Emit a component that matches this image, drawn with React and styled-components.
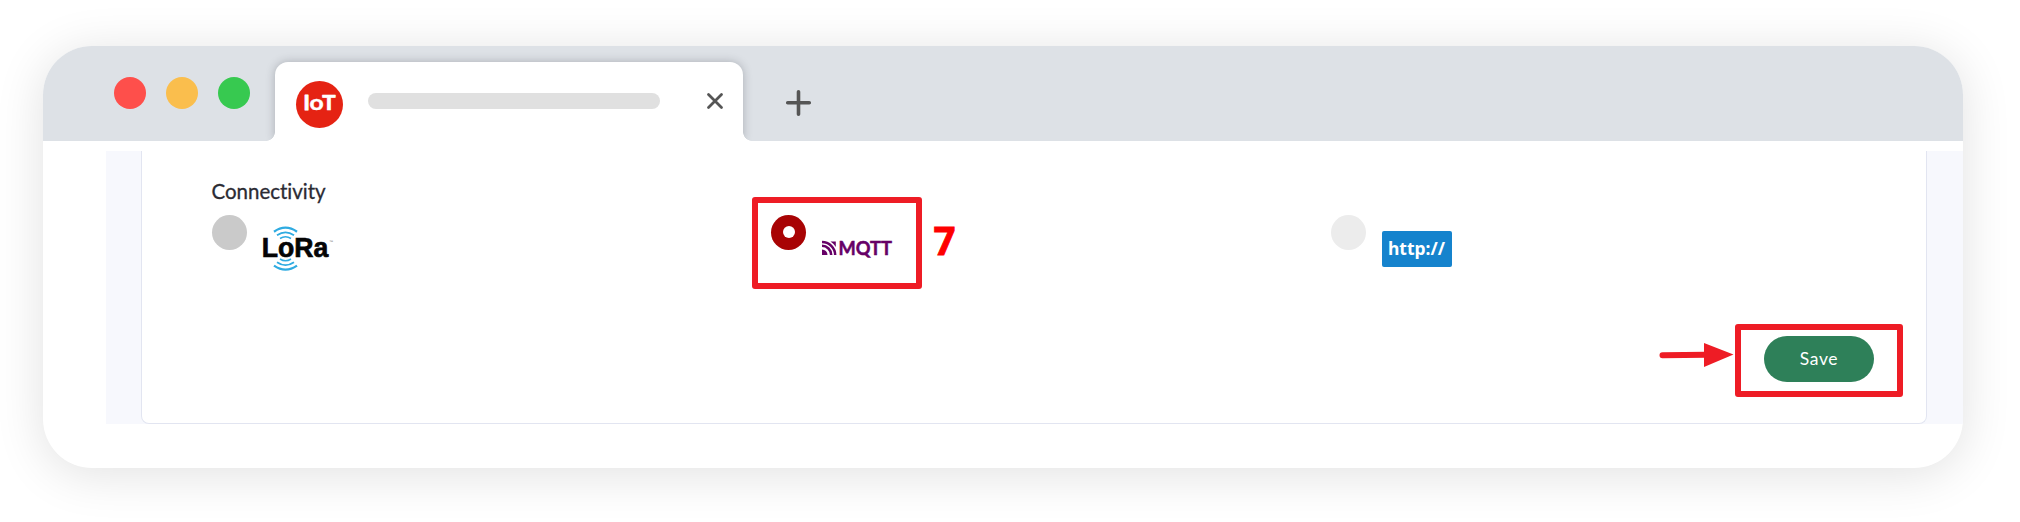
import React from 'react';
import styled, { createGlobalStyle } from 'styled-components';

const GlobalStyle = createGlobalStyle`
  *, *::before, *::after { box-sizing: border-box; }
  body { margin: 0; background: #fff; font-family: Lato, "Liberation Sans", sans-serif; overflow: hidden; }
  svg { display: block; overflow: visible; }
`;

const Stage = styled.div`
  width: 2020px;
  height: 522px;
  padding: 46px 57px 54px 43px;
`;

const BrowserWindow = styled.main`
  height: 422px;
  border-radius: 49px;
  background: #fff;
  overflow: hidden;
  box-shadow: 0 6px 50px rgba(0, 0, 0, 0.12);
`;

const TitleBar = styled.header`
  height: 95px;
  display: flex;
  padding: 16px 0 0 71px;
  background: #dde1e6;
`;

const Lights = styled.div`
  display: flex;
  gap: 20px;
  padding-top: 15px;
  width: 161px;
`;

const Light = styled.span`
  width: 32px;
  height: 32px;
  border-radius: 50%;
  background: ${(p) => p.$color};
`;

const Tab = styled.div`
  position: relative;
  width: 468px;
  height: 79px;
  padding: 19px 20px 0 21px;
  display: flex;
  align-items: flex-start;
  background: #fff;
  border-radius: 13px 13px 0 0;
  box-shadow: 0 0 10px rgba(40, 42, 55, 0.28);
  clip-path: inset(-16px -12px 0 -12px);
  &::before,
  &::after {
    content: '';
    position: absolute;
    bottom: 0;
    width: 9px;
    height: 9px;
  }
  &::before {
    left: -9px;
    background: radial-gradient(circle at 0 0, transparent 8.5px, #fff 9.2px);
  }
  &::after {
    right: -9px;
    background: radial-gradient(circle at 100% 0, transparent 8.5px, #fff 9.2px);
  }
`;

const TitlePlaceholder = styled.div`
  width: 292px;
  height: 16px;
  margin: 12px 47px 0 25px;
  border-radius: 8px;
  background: #e0e0e0;
`;

const CloseIcon = styled.svg`
  margin-top: 12px;
`;

const NewTabIcon = styled.svg`
  margin: 28px 0 0 43px;
`;

const Content = styled.section`
  height: 273px;
  margin: 10px 0 0 63px;
  padding: 0 36px 0 35px;
  background: #f7f8fd;
`;

const Card = styled.div`
  height: 273px;
  padding: 26px 52px 0 69.5px;
  background: #fff;
  border: solid #e2e5f1;
  border-width: 0 1px 1px;
  border-radius: 0 0 8px 8px;
`;

const FieldLabel = styled.h2`
  margin: 0;
  height: 37px;
  line-height: 28px;
  font-size: 20.5px;
  font-weight: 400;
  font-variant-ligatures: none;
  letter-spacing: -0.02px;
  color: #2b2b33;
  -webkit-text-stroke: 0.3px #2b2b33;
`;

const Options = styled.div`
  display: grid;
  grid-template-columns: repeat(3, 559.5px);
  height: 122px;
`;

const Option = styled.label`
  position: relative;
  display: flex;
  gap: 16px;
  width: max-content;
  height: 60px;
`;

const Radio = styled.span`
  width: 35px;
  height: 35px;
  margin-top: 0.5px;
  border-radius: 50%;
  background: ${(p) => p.$color};
  display: grid;
  place-items: center;
  &::after {
    content: '';
    width: 12px;
    height: 12px;
    border-radius: 50%;
    background: ${(p) => (p.$checked ? '#fff' : 'transparent')};
  }
`;

const Highlight = styled.span`
  position: absolute;
  inset: ${(p) => p.$inset};
  border: 6px solid #ee1c25;
  border-radius: 3px;
`;

const StepNumber = styled.span`
  position: absolute;
  left: 162.5px;
  top: 2px;
  font: 700 38.5px/48px "Noto Sans", "Open Sans", sans-serif;
  color: #fe0000;
  -webkit-text-stroke: 0.8px #fe0000;
`;

const HttpBadge = styled.span`
  width: 70px;
  height: 36px;
  margin-top: 17px;
  border-radius: 2px;
  background: #1583cd;
  color: #fff;
  font: 700 17.5px/34px "Noto Sans", "Open Sans", sans-serif;
  text-align: center;
`;

const Actions = styled.footer`
  display: flex;
  justify-content: flex-end;
`;

const SaveWrap = styled.div`
  position: relative;
`;

const SaveButton = styled.button`
  display: block;
  width: 110px;
  height: 46px;
  padding: 0 0 1px;
  border: 0;
  border-radius: 23px;
  background: #2e8059;
  color: #fff;
  font: 400 17.5px Lato, sans-serif;
  letter-spacing: 0.6px;
`;

const Arrow = styled.svg`
  position: absolute;
  left: -106px;
  top: 6px;
`;

function IotLogo() {
  return (
    <svg width="47" height="47" viewBox="0 0 47 47">
      <circle cx="23.5" cy="23.5" r="23.5" fill="#e52313" />
      <g fill="#fff" stroke="#fff" strokeWidth="1" strokeLinejoin="round" fontFamily="Lato, sans-serif" fontWeight="700" fontSize="21">
        <text x="7.6" y="29.3">I</text>
        <text x="13.4" y="29.3" fontSize="20" strokeWidth=".4" textLength="14.2" lengthAdjust="spacingAndGlyphs">o</text>
        <text x="26.2" y="29.3" strokeWidth=".7" textLength="13.4" lengthAdjust="spacingAndGlyphs">T</text>
      </g>
    </svg>
  );
}

function LoraLogo() {
  return (
    <svg width="70" height="60" viewBox="0 0 70 60">
      <g fill="none" stroke="#2fabe1" strokeWidth="2.3">
        <path d="M11 17.7Q22.5 9.7 34 17.7" />
        <path d="M14 21.3Q22.5 15.5 31 21.3" strokeWidth="1.8" />
        <path d="M17 24.5Q22.5 21 28 24.5" strokeWidth="1.5" />
        <path d="M17 45Q22.5 48.5 28 45" strokeWidth="1.5" />
        <path d="M14 48.3Q22.5 54.1 31 48.3" strokeWidth="1.8" />
        <path d="M11 51.6Q22.5 59.6 34 51.6" />
      </g>
      <g fill="#050505" stroke="#050505" strokeWidth=".7" fontFamily="'Liberation Sans', sans-serif" fontWeight="700">
        <text x="-1.2" y="42.5" fontSize="28" textLength="66.5" lengthAdjust="spacingAndGlyphs">LoRa</text>
      </g>
      <text x="66" y="29" fontSize="4" fill="#777" fontFamily="'Liberation Sans', sans-serif">™</text>
    </svg>
  );
}

function MqttLogo() {
  return (
    <svg width="70" height="60" viewBox="0 0 70 60">
      <g fill="none" stroke="#660066" strokeWidth="2.5">
        <path d="M0 35.5A5.5 5.5 0 0 1 5.5 41H0Z" fill="#660066" stroke="none" />
        <path d="M0 31.8A9.2 9.2 0 0 1 9.2 41" />
        <path d="M0 28A13.2 13.2 0 0 1 13.2 41" />
        <path d="M8.5 27.5A17 17 0 0 1 13.8 33V27.5Z" fill="#660066" stroke="none" />
      </g>
      <text x="16.4" y="41" textLength="53.5" lengthAdjust="spacingAndGlyphs" fontFamily="Lato, sans-serif" fontWeight="700" fontSize="19" fill="#660066" stroke="#660066" strokeWidth=".5">
        MQTT
      </text>
    </svg>
  );
}

export default function App() {
  return (
    <>
      <GlobalStyle />
      <Stage>
        <BrowserWindow>
          <TitleBar>
            <Lights>
              <Light $color="#fe4f4b" />
              <Light $color="#fabe4d" />
              <Light $color="#37c950" />
            </Lights>
            <Tab>
              <IotLogo />
              <TitlePlaceholder />
              <CloseIcon width="16" height="16" viewBox="0 0 16 16" stroke="#555" strokeWidth="2.8" strokeLinecap="round">
                <path d="M1.5 1.5l13 13M14.5 1.5l-13 13" />
              </CloseIcon>
            </Tab>
            <NewTabIcon width="25" height="26" viewBox="0 0 25 26" stroke="#555" strokeWidth="3.6" strokeLinecap="round">
              <path d="M12.5 1.7v22.6M1.7 12.8h21.6" />
            </NewTabIcon>
          </TitleBar>
          <Content>
            <Card>
              <FieldLabel>Connectivity</FieldLabel>
              <Options>
                <Option>
                  <Radio $color="#cacaca" />
                  <LoraLogo />
                </Option>
                <Option>
                  <Radio $color="#a80304" $checked />
                  <MqttLogo />
                  <Highlight $inset="-17.5px -30px -14.5px -19px" />
                  <StepNumber>7</StepNumber>
                </Option>
                <Option>
                  <Radio $color="#ececec" />
                  <HttpBadge>http://</HttpBadge>
                </Option>
              </Options>
              <Actions>
                <SaveWrap>
                  <SaveButton>Save</SaveButton>
                  <Highlight $inset="-12px -28.5px -14.5px -29.5px" />
                  <Arrow width="76" height="26" viewBox="0 0 76 26">
                    <path d="M4.5 13.2L48 12.8" stroke="#ee1c25" strokeWidth="6" strokeLinecap="round" />
                    <path d="M46 1L75.5 12.5L46 25Z" fill="#ee1c25" />
                  </Arrow>
                </SaveWrap>
              </Actions>
            </Card>
          </Content>
        </BrowserWindow>
      </Stage>
    </>
  );
}
